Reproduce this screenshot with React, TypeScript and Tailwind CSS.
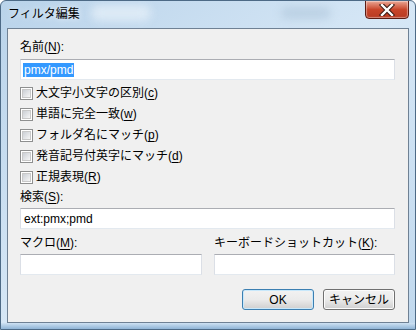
import React from "react";

const font = { fontFamily: '"Liberation Sans", "Noto Sans CJK JP", sans-serif' };

function Acc({ c }: { c: string }) {
  return (
    <span>
      (<span className="underline underline-offset-2">{c}</span>)
    </span>
  );
}

function Check({ label, acc }: { label: string; acc: string }) {
  return (
    <div className="flex h-[21px] items-center">
      <div className="flex h-[13px] w-[13px] items-center justify-center border border-[#8e8f8f] bg-white">
        <div className="h-[9px] w-[9px] border border-[#c8c8c8] bg-gradient-to-br from-[#cbcfd5] to-[#f6f6f6]" />
      </div>
      <span className="ml-[3px] text-[12px] leading-[15px] text-black">
        {label}
        <Acc c={acc} />
      </span>
    </div>
  );
}

function Input({ children, className = "" }: { children?: React.ReactNode; className?: string }) {
  return (
    <div
      className={`flex items-center border border-t-[#abadb3] border-x-[#dbdfe6] border-b-[#e3e9ef] bg-white px-[2px] text-[12px] text-black ${className}`}
    >
      {children}
    </div>
  );
}

export default function App() {
  return (
    <div
      className="relative flex h-[330px] w-[416px] flex-col overflow-hidden rounded-t-[6px] border border-[#4d6a86] bg-gradient-to-br from-[#b9d3ea] via-[#d6e7f6] to-[#c1d9ee]"
      style={font}
    >
      {/* blurred background hints */}
      <div className="absolute left-[90px] top-[4px] h-[16px] w-[60px] rounded-full bg-[#e9f2fa] opacity-70 blur-[4px]" />
      <div className="absolute left-[280px] top-[6px] h-[12px] w-[50px] rounded-full bg-[#a9c1d6] opacity-50 blur-[4px]" />
      {/* title bar */}
      <div className="flex h-[27px] shrink-0 items-center pl-[7px]">
        <span className="text-[12px] leading-[15px] text-black [text-shadow:0_0_6px_rgba(255,255,255,0.9)]">
          フィルタ編集
        </span>
      </div>
      {/* close button */}
      <div className="absolute right-[6px] top-[-1px] flex h-[19px] w-[44px] items-center justify-center rounded-b-[4px] border border-[#5b1d15] bg-gradient-to-b from-[#e8a493] via-[#c8452a] to-[#b83b23] shadow-[inset_0_0_1px_1px_rgba(255,255,255,0.4)]">
        <svg width="16" height="12" viewBox="0 0 16 12">
          <path
            d="M3 1 L13 11 M13 1 L3 11"
            stroke="#3a1a14"
            strokeWidth="4.4"
            strokeLinecap="square"
          />
          <path d="M3 1 L13 11 M13 1 L3 11" stroke="#ffffff" strokeWidth="2.4" strokeLinecap="square" />
        </svg>
      </div>

      {/* content panel */}
      <div className="mx-[6px] flex h-[295px] flex-col border border-[#6f8194] bg-[#f0f0f0] pl-[12px] pr-[12px] pt-[11px] text-[12px] text-black">
        <div className="h-[15px] leading-[15px]">
          名前<Acc c="N" />:
        </div>
        <Input className="mt-[4px] h-[21px] w-[375px]">
          <span className="bg-[#3399ff] px-[1px] leading-[14px] text-white">pmx/pmd</span>
        </Input>
        <div className="mt-[3px] flex flex-col">
          <Check label="大文字小文字の区別" acc="c" />
          <Check label="単語に完全一致" acc="w" />
          <Check label="フォルダ名にマッチ" acc="p" />
          <Check label="発音記号付英字にマッチ" acc="d" />
          <Check label="正規表現" acc="R" />
        </div>
        <div className="mt-[2px] h-[15px] leading-[15px]">
          検索<Acc c="S" />:
        </div>
        <Input className="mt-[3px] h-[21px] w-[375px]">
          <span className="pl-[1px]">ext:pmx;pmd</span>
        </Input>
        <div className="mt-[7px] flex gap-[12px]">
          <div className="flex w-[182px] flex-col">
            <div className="h-[15px] leading-[15px]">
              マクロ<Acc c="M" />:
            </div>
            <Input className="mt-[3px] h-[21px] w-[182px]" />
          </div>
          <div className="flex w-[181px] flex-col">
            <div className="h-[15px] leading-[15px]">
              キーボードショットカット<Acc c="K" />:
            </div>
            <Input className="mt-[3px] h-[21px] w-[181px]" />
          </div>
        </div>
        <div className="mt-[14px] flex justify-end gap-[9px] pr-[1px]">
          <button className="flex h-[21px] w-[72px] items-center justify-center rounded-[3px] border border-[#3c7fb1] bg-gradient-to-b from-[#f2f2f2] via-[#ebebeb] to-[#cfcfcf] text-[12px] text-black shadow-[inset_0_0_0_1px_#c8e8fb]">
            OK
          </button>
          <button className="flex h-[21px] w-[72px] items-center justify-center rounded-[3px] border border-[#707070] bg-gradient-to-b from-[#f2f2f2] via-[#ebebeb] to-[#cfcfcf] text-[12px] text-black shadow-[inset_0_0_0_1px_#fcfcfc]">
            キャンセル
          </button>
        </div>
      </div>
      <div className="flex-1 bg-gradient-to-b from-[#cfe2f3] to-[#8fb4d6]" />
    </div>
  );
}
